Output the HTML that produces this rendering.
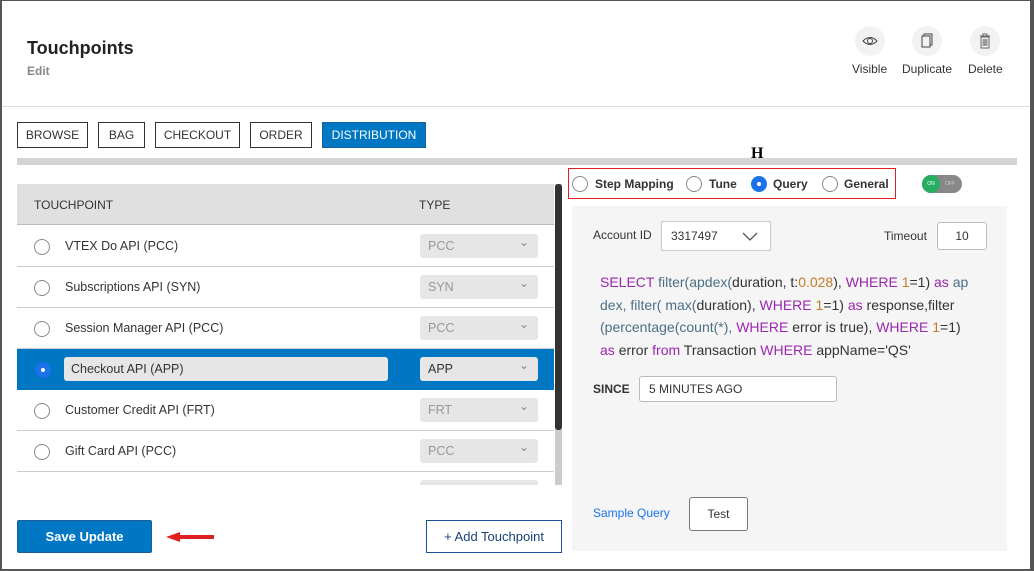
<!DOCTYPE html>
<html><head><style>
*{box-sizing:border-box;margin:0;padding:0}
body{width:1034px;height:571px;overflow:hidden;background:#555;font-family:"Liberation Sans",sans-serif;position:relative}
.modal{position:absolute;left:2px;top:1px;width:1028px;height:568px;background:#fff}
.abs{position:absolute}
.tab{position:absolute;top:122px;height:26px;border:1px solid #333;font-size:12px;color:#333;display:flex;align-items:center;justify-content:center}
.row{position:absolute;left:17px;width:537px;height:41px;border-bottom:1px solid #ccc;background:#fff}
.row .rad{position:absolute;left:17px;top:13px;width:16px;height:16px;border:1px solid #888;border-radius:50%;background:#fff}
.row .lbl{position:absolute;left:48px;top:13px;font-size:12.5px;color:#333}
.row .sel{position:absolute;left:403px;top:8px;width:118px;height:24px;background:#e6e6e6;border-radius:3px;font-size:12.5px;color:#999;padding:5px 0 0 8px}
.row .sel:after{content:"⌄";position:absolute;right:9px;top:1px;font-size:12px;color:#888}
.ico{position:absolute;top:25px;width:30px;height:30px;border-radius:50%;background:#f2f2f2}
.icl{position:absolute;top:61px;font-size:12px;color:#333}
.r{position:absolute;top:7px;width:16px;height:16px;border:1px solid #888;border-radius:50%;background:#fff}
.rt{position:absolute;top:8px;font-size:12px;font-weight:bold;color:#333;white-space:nowrap}
.p{color:#9c27b0}.t{color:#4c6f86}.o{color:#c47a2a}.k{color:#333}
</style></head><body>
<div class="modal">
<div class="abs" style="left:25px;top:37px;font-size:18px;font-weight:bold;color:#222">Touchpoints</div>
<div class="abs" style="left:25px;top:63px;font-size:12px;font-weight:bold;color:#888">Edit</div>
<div class="ico" style="left:853px"><svg width="30" height="30"><path d="M8 15 Q15 8 22 15 Q15 22 8 15Z" fill="none" stroke="#444"/><circle cx="15" cy="15" r="2.5" fill="none" stroke="#444"/></svg></div>
<div class="ico" style="left:910px"><svg width="30" height="30"><rect x="10" y="10" width="8" height="11" fill="none" stroke="#444"/><path d="M12 10V8h8v11h-2" fill="none" stroke="#444"/></svg></div>
<div class="ico" style="left:968px"><svg width="30" height="30"><path d="M10 10h10M13 10V8h4v2M11 11h8v11h-8z" fill="none" stroke="#666"/><rect x="12.5" y="13" width="5" height="7" fill="#999"/></svg></div>
<div class="icl" style="left:850px">Visible</div>
<div class="icl" style="left:900px">Duplicate</div>
<div class="icl" style="left:966px">Delete</div>
<div class="abs" style="left:0;top:105px;width:1028px;height:1px;background:#ddd"></div>
</div>
<div class="tab" style="left:17px;width:71px">BROWSE</div>
<div class="tab" style="left:98px;width:47px">BAG</div>
<div class="tab" style="left:155px;width:85px">CHECKOUT</div>
<div class="tab" style="left:250px;width:62px">ORDER</div>
<div class="tab" style="left:322px;width:104px;background:#0077c2;color:#fff;border-color:#1b5f9a">DISTRIBUTION</div>
<div class="abs" style="left:17px;top:158px;width:1000px;height:7px;background:#d4d4d4"></div>
<div class="abs" style="left:751px;top:145px;font-family:'Liberation Serif',serif;font-weight:bold;font-size:16px">H</div>
<div class="abs" style="left:17px;top:184px;width:537px;height:41px;background:#e0e0e0;border-bottom:1px solid #bbb"></div>
<div class="abs" style="left:34px;top:198px;font-size:12px;color:#333">TOUCHPOINT</div>
<div class="abs" style="left:419px;top:198px;font-size:12px;color:#333">TYPE</div>
<div style="position:absolute;left:0;top:226px;width:560px;height:259px;overflow:hidden">
<div class="row" style="top:0"><div class="rad"></div><div class="lbl">VTEX Do API (PCC)</div><div class="sel">PCC</div></div>
<div class="row" style="top:41px"><div class="rad"></div><div class="lbl">Subscriptions API (SYN)</div><div class="sel">SYN</div></div>
<div class="row" style="top:82px"><div class="rad"></div><div class="lbl">Session Manager API (PCC)</div><div class="sel">PCC</div></div>
<div class="row" style="top:123px;background:#0077c2;border-color:#0077c2"><div class="rad" style="background:#1a73e8;border-color:#1a73e8;left:18px"><div style="width:4px;height:4px;background:#fff;border-radius:50%;margin:5px"></div></div><div style="position:absolute;left:47px;top:8px;width:324px;height:24px;background:#e6e6e6;border-radius:3px;font-size:12.5px;color:#333;padding:5px 0 0 7px">Checkout API (APP)</div><div class="sel" style="color:#333">APP</div></div>
<div class="row" style="top:164px"><div class="rad"></div><div class="lbl">Customer Credit API (FRT)</div><div class="sel">FRT</div></div>
<div class="row" style="top:205px"><div class="rad"></div><div class="lbl">Gift Card API (PCC)</div><div class="sel">PCC</div></div>
<div class="row" style="top:246px"><div class="sel"></div></div>
</div>
<div class="abs" style="left:555px;top:184px;width:7px;height:301px;background:#ccc"></div>
<div class="abs" style="left:555px;top:184px;width:7px;height:246px;background:#333;border-radius:3px"></div>
<div class="abs" style="left:17px;top:520px;width:135px;height:33px;background:#0077c2;border:1px solid #1b5f9a;border-radius:2px;color:#fff;font-size:13px;font-weight:bold;text-align:center;line-height:31px">Save Update</div>
<svg class="abs" style="left:166px;top:531px" width="48" height="12"><path d="M0 6L14 1V4H48V8H14V11Z" fill="#e02020"/></svg>
<div class="abs" style="left:426px;top:520px;width:136px;height:33px;border:1px solid #1b4f9a;color:#1b3f7a;font-size:13px;text-align:center;line-height:31px">+ Add Touchpoint</div>
<div class="abs" style="left:568px;top:168px;width:328px;height:31px;border:1px solid #e02020">
<span class="r" style="left:3px"></span><span class="rt" style="left:26px">Step Mapping</span>
<span class="r" style="left:117px"></span><span class="rt" style="left:140px">Tune</span>
<span class="r" style="left:182px;background:#1a73e8;border-color:#1a73e8"><span style="position:absolute;left:5px;top:5px;width:4px;height:4px;background:#fff;border-radius:50%"></span></span><span class="rt" style="left:204px">Query</span>
<span class="r" style="left:253px"></span><span class="rt" style="left:275px">General</span></div>
<div class="abs" style="left:922px;top:175px;width:40px;height:18px;border-radius:9px;background:#888"><div style="width:18px;height:18px;border-radius:50%;background:#27ae60;color:#fff;font-size:5px;text-align:center;line-height:18px">ON</div><span style="position:absolute;left:23px;top:6px;font-size:5px;color:#ccc">OFF</span></div>
<div class="abs" style="left:572px;top:206px;width:435px;height:345px;background:#f5f5f5"></div>
<div class="abs" style="left:593px;top:228px;font-size:12px;color:#333">Account ID</div>
<div class="abs" style="left:661px;top:221px;width:110px;height:30px;border:1px solid #ccc;background:#fff;font-size:12px;color:#333;padding:7px 0 0 9px">3317497<svg style="position:absolute;right:12px;top:10px" width="16" height="10"><path d="M1 1L8 8L15 1" fill="none" stroke="#555" stroke-width="1.3"/></svg></div>
<div class="abs" style="left:884px;top:229px;font-size:12px;color:#333">Timeout</div>
<div class="abs" style="left:937px;top:222px;width:50px;height:28px;border:1px solid #bbb;border-radius:3px;background:#fff;font-size:12px;color:#333;text-align:center;line-height:26px">10</div>
<div class="abs" style="left:600px;top:271px;width:380px;font-size:14px;line-height:22.5px;white-space:nowrap">
<span class="p">SELECT</span> <span class="t">filter(apdex(</span><span class="k">duration, t:</span><span class="o">0.028</span><span class="k">), </span><span class="p">WHERE</span> <span class="o">1</span><span class="k">=1)</span> <span class="p">as</span> <span class="t">ap</span><br>
<span class="t">dex, filter( max(</span><span class="k">duration), </span><span class="p">WHERE</span> <span class="o">1</span><span class="k">=1)</span> <span class="p">as</span> <span class="k">response,filter</span><br>
<span class="t">(percentage(count(*), </span><span class="p">WHERE</span> <span class="k">error is true), </span><span class="p">WHERE</span> <span class="o">1</span><span class="k">=1)</span><br>
<span class="p">as</span> <span class="k">error</span> <span class="p">from</span> <span class="k">Transaction</span> <span class="p">WHERE</span> <span class="k">appName='QS'</span></div>
<div class="abs" style="left:593px;top:382px;font-size:12px;font-weight:bold;color:#333">SINCE</div>
<div class="abs" style="left:639px;top:376px;width:198px;height:26px;border:1px solid #bbb;border-radius:3px;background:#fff;font-size:12px;color:#333;padding:5px 0 0 9px">5 MINUTES AGO</div>
<div class="abs" style="left:593px;top:506px;font-size:12px;color:#1a73e8">Sample Query</div>
<div class="abs" style="left:689px;top:497px;width:59px;height:34px;border:1px solid #777;border-radius:3px;background:#fff;font-size:12px;color:#333;text-align:center;line-height:32px">Test</div>
</body></html>
